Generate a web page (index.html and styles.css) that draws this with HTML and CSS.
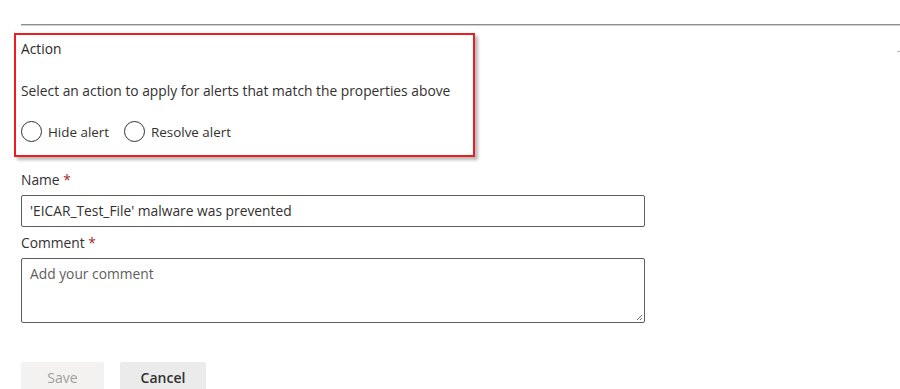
FILE: index.html
```html
<!DOCTYPE html>
<html>
<head>
<meta charset="utf-8">
<link rel="stylesheet" href="styles.css">
</head>
<body>
<div class="page">
  <div class="divider"></div>
  <span class="edge-dot"></span>
  <section class="action-box">
    <div class="section-title">Action</div>
    <div class="section-desc">Select an action to apply for alerts that match the properties above</div>
    <div class="radio-row">
      <label class="radio"><span class="radio-circle"></span><span>Hide alert</span></label>
      <label class="radio"><span class="radio-circle"></span><span>Resolve alert</span></label>
    </div>
  </section>
  <div class="form">
    <div class="field-label">Name <span class="req">*</span></div>
    <div class="input">'EICAR_Test_File' malware was prevented</div>
    <div class="field-label comment-label">Comment <span class="req">*</span></div>
    <div class="textarea">
      <span class="placeholder">Add your comment</span>
      <svg class="grip" width="8" height="8" viewBox="0 0 8 8"><path d="M7 2 L2 7 M7 5 L5 7" stroke="#777" stroke-width="1" fill="none"/></svg>
    </div>
    <div class="buttons">
      <button class="btn btn-disabled">Save</button>
      <button class="btn btn-secondary">Cancel</button>
    </div>
  </div>
</div>
</body>
</html>
```
FILE: styles.css
```css
html, body {
  margin: 0;
  padding: 0;
  background: #ffffff;
}
body {
  font-family: "Open Sans", "Noto Sans", sans-serif;
  font-size: 13.8px;
  color: #323130;
  width: 900px;
  height: 389px;
  overflow: hidden;
}
.page {
  position: relative;
  padding-top: 24px;
}
.divider {
  margin-left: 21px;
  height: 0;
  border-top: 1px solid #8f8f8f;
  border-bottom: 1px solid #cfcfcf;
}
.edge-dot {
  position: absolute;
  left: 897px;
  top: 51px;
  width: 3px;
  height: 1px;
  background: #b8b8b8;
}
.action-box {
  margin-top: 7px;
  margin-left: 14px;
  width: 452px;
  height: 120px;
  border: 2px solid #ee1c1c;
  box-shadow: 3px 3px 3px rgba(0, 0, 0, 0.28);
  padding-left: 5px;
  box-sizing: content-box;
  display: flex;
  flex-direction: column;
}
.section-title {
  margin-top: 4px;
  line-height: 20px;
  color: #2b2a29;
}
.section-desc {
  margin-top: 22px;
  line-height: 20px;
}
.radio-row {
  margin-top: 20px;
  display: flex;
  gap: 15px;
  font-size: 13.4px;
}
.radio {
  display: flex;
  align-items: center;
  gap: 6px;
  line-height: 20px;
}
.radio-circle {
  width: 19px;
  height: 19px;
  border: 1px solid #323130;
  border-radius: 50%;
}
.form {
  margin-left: 21px;
  width: 624px;
  padding-top: 13px;
  display: flex;
  flex-direction: column;
}
.field-label {
  line-height: 20px;
  height: 20px;
}
.req {
  color: #a4262c;
}
.input {
  margin-top: 5px;
  height: 30px;
  border: 1px solid #605e5c;
  border-radius: 2px;
  padding: 0 8px;
  line-height: 30px;
}
.comment-label {
  margin-top: 6px;
}
.textarea {
  position: relative;
  margin-top: 5px;
  height: 63px;
  border: 1px solid #605e5c;
  border-radius: 2px;
  padding: 0 8px;
  line-height: 30px;
}
.placeholder {
  color: #605e5c;
}
.grip {
  position: absolute;
  right: 1px;
  bottom: 1px;
}
.buttons {
  margin-top: 39px;
  display: flex;
  gap: 16px;
}
.btn {
  font-family: inherit;
  font-size: 14px;
  height: 32px;
  border: none;
  border-radius: 2px;
  padding: 0;
  line-height: 32px;
}
.btn-disabled {
  width: 83px;
  background: #f3f2f1;
  color: #a19f9d;
}
.btn-secondary {
  width: 86px;
  background: #ebebeb;
  color: #323130;
  font-weight: 600;
}
```
